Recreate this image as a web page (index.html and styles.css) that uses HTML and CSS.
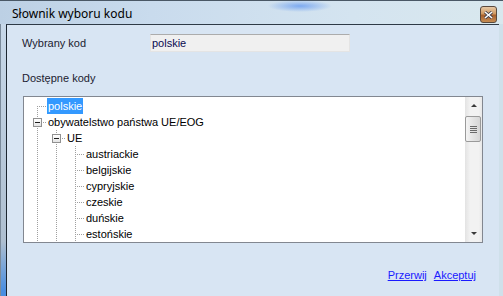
FILE: index.html
```html
<!DOCTYPE html>
<html lang="pl">
<head>
  <meta charset="UTF-8">
  <title>Słownik wyboru kodu</title>
  <link rel="stylesheet" href="styles.css">
</head>
<body>
  <div class="window">
    <div class="titlebar">
      <span class="title">Słownik wyboru kodu</span>
      <span class="close-btn">
        <svg width="9" height="8" viewBox="0 0 9 8">
          <path d="M1 1 L8 7 M8 1 L1 7" stroke="#3a3a4a" stroke-width="3"/>
          <path d="M1 1 L8 7 M8 1 L1 7" stroke="#ffffff" stroke-width="1.6"/>
        </svg>
      </span>
    </div>
    <div class="frame">
      <div class="side side-left"></div>
      <div class="client">
        <div class="field-row">
          <span class="label">Wybrany kod</span>
          <span class="code-input">polskie</span>
        </div>
        <div class="label section-label">Dostępne kody</div>

        <div class="tree-box">
          <div class="tree">
            <div class="row">
              <span class="cell first"></span>
              <span class="node selected">polskie</span>
            </div>
            <div class="row">
              <span class="cell tee exp"><span class="toggle"></span></span>
              <span class="node">obywatelstwo państwa UE/EOG</span>
            </div>
            <div class="row">
              <span class="cell line"></span>
              <span class="cell tee exp"><span class="toggle"></span></span>
              <span class="node">UE</span>
            </div>
            <div class="row">
              <span class="cell line"></span><span class="cell line"></span><span class="cell tee"></span>
              <span class="node">austriackie</span>
            </div>
            <div class="row">
              <span class="cell line"></span><span class="cell line"></span><span class="cell tee"></span>
              <span class="node">belgijskie</span>
            </div>
            <div class="row">
              <span class="cell line"></span><span class="cell line"></span><span class="cell tee"></span>
              <span class="node">cypryjskie</span>
            </div>
            <div class="row">
              <span class="cell line"></span><span class="cell line"></span><span class="cell tee"></span>
              <span class="node">czeskie</span>
            </div>
            <div class="row">
              <span class="cell line"></span><span class="cell line"></span><span class="cell tee"></span>
              <span class="node">duńskie</span>
            </div>
            <div class="row">
              <span class="cell line"></span><span class="cell line"></span><span class="cell tee"></span>
              <span class="node">estońskie</span>
            </div>
          </div>
          <div class="scrollbar">
            <div class="sb-btn"><span class="arrow up"></span></div>
            <div class="sb-thumb">
              <span></span><span></span><span></span><span></span>
            </div>
            <div class="sb-track"></div>
            <div class="sb-btn"><span class="arrow down"></span></div>
          </div>
        </div>

        <div class="actions">
          <a href="#">Przerwij</a>
          <a href="#">Akceptuj</a>
        </div>
      </div>
      <div class="side side-right"></div>
    </div>
  </div>
</body>
</html>
```

FILE: styles.css
```css
* { box-sizing: border-box; }
body {
  margin: 0;
  width: 503px;
  height: 296px;
  overflow: hidden;
  font-family: "Liberation Sans", Arial, sans-serif;
  font-size: 11px;
  background: #c8d9ea;
}
.window {
  width: 503px;
  height: 296px;
  display: flex;
  flex-direction: column;
  border-top: 1px solid #4a5866;
  background:
    radial-gradient(ellipse 32px 6px at 300px 5px, rgba(110, 160, 240, 0.85), rgba(110, 160, 240, 0) 100%),
    linear-gradient(to right, #bcd0e4 0%, #c9dbed 30%, #d4e4f0 70%, #d9e8ee 100%);
}
.titlebar {
  height: 23px;
  display: flex;
  align-items: center;
  justify-content: space-between;
  padding: 0 3px 0 12px;
}
.title {
  font-family: "Noto Sans", sans-serif;
  font-size: 12px;
  color: #000;
  margin-top: 2px;
}
.close-btn {
  width: 17px;
  height: 17px;
  margin-top: 4px;
  margin-right: 3px;
  border: 1px solid #5a4a3e;
  border-radius: 3px;
  background: linear-gradient(to bottom, #e6c9a6 0%, #d19a62 45%, #a8602c 55%, #c58d55 100%);
  display: flex;
  align-items: center;
  justify-content: center;
}
.frame {
  flex: 1;
  display: flex;
}
.side-left {
  width: 6px;
  background: linear-gradient(to bottom, #c7d8e9, #aebfd0 80%, #4a8ee0 98%);
  border-left: 1px solid #7a8a9a;
}
.side-right {
  width: 4px;
  background: #cfe0ea;
}
.client {
  flex: 1;
  background: #d8e5f3;
  border-top: 1px solid #2e3a46;
  border-left: 1px solid #1c2630;
  padding: 9px 0 0 15px;
  color: #1b1b30;
}
.field-row {
  display: flex;
  align-items: center;
  height: 18px;
}
.label {
  width: 128px;
}
.code-input {
  width: 200px;
  height: 18px;
  background: #f0f0f0;
  border: 1px solid #e4e4e4;
  border-top-color: #acacac;
  padding-left: 1px;
  line-height: 16px;
  color: #0a0a50;
}
.section-label {
  margin-top: 18px;
  line-height: 16px;
}
.tree-box {
  margin: 10px 0 0 1px;
  width: 460px;
  height: 147px;
  border: 1px solid #828790;
  background: #fff;
  display: flex;
}
.tree {
  flex: 1;
  padding: 1px 0 0 3px;
  overflow: hidden;
  color: #000;
}
.row {
  display: flex;
  align-items: center;
  height: 16px;
  white-space: nowrap;
}
.cell {
  flex: none;
  width: 19px;
  height: 16px;
  background-repeat: no-repeat;
}
.line {
  background-image: repeating-linear-gradient(to bottom, #a0a0a0 0 1px, transparent 1px 2px);
  background-position: 10px 0;
  background-size: 1px 16px;
}
.tee {
  background-image:
    repeating-linear-gradient(to bottom, #a0a0a0 0 1px, transparent 1px 2px),
    repeating-linear-gradient(to right, #a0a0a0 0 1px, transparent 1px 2px);
  background-position: 10px 0, 10px 8px;
  background-size: 1px 16px, 9px 1px;
}
.first {
  background-image:
    repeating-linear-gradient(to bottom, #a0a0a0 0 1px, transparent 1px 2px),
    repeating-linear-gradient(to right, #a0a0a0 0 1px, transparent 1px 2px);
  background-position: 10px 8px, 10px 8px;
  background-size: 1px 8px, 9px 1px;
}
.exp {
  display: flex;
  align-items: center;
  padding-left: 6px;
}
.toggle {
  width: 9px;
  height: 9px;
  border: 1px solid #919191;
  background: linear-gradient(to bottom, #ffffff, #e4e4e4);
  display: flex;
  align-items: center;
  justify-content: center;
}
.toggle::before {
  content: "";
  width: 5px;
  height: 1px;
  background: #1e1e1e;
}
.node {
  margin-left: 1px;
  padding: 0 1px;
  line-height: 16px;
}
.node.selected {
  background: #3399ff;
  color: #fff;
}
.scrollbar {
  width: 17px;
  display: flex;
  flex-direction: column;
  background: linear-gradient(to right, #e3e3e3, #f2f2f2 30%, #f2f2f2 80%, #e8e8e8);
}
.sb-btn {
  height: 17px;
  display: flex;
  align-items: center;
  justify-content: center;
}
.arrow {
  width: 0;
  height: 0;
  border-left: 3px solid transparent;
  border-right: 3px solid transparent;
}
.arrow.up { border-bottom: 3px solid #3a3a3a; }
.arrow.down { border-top: 3px solid #3a3a3a; }
.sb-thumb {
  margin: 2px 1px 0 0;
  height: 26px;
  border: 1px solid #9a9a9a;
  border-radius: 2px;
  background: linear-gradient(to right, #f4f4f4, #e4e4e4 50%, #d6d6d6);
  display: flex;
  flex-direction: column;
  align-items: center;
  justify-content: center;
  gap: 1px;
}
.sb-thumb span {
  width: 7px;
  height: 1px;
  background: #6a6a6a;
}
.sb-track { flex: 1; }
.actions {
  display: flex;
  justify-content: flex-end;
  gap: 7px;
  width: 454px;
  margin-top: 25px;
}
.actions a {
  color: #1a1aff;
  line-height: 14px;
}
```
